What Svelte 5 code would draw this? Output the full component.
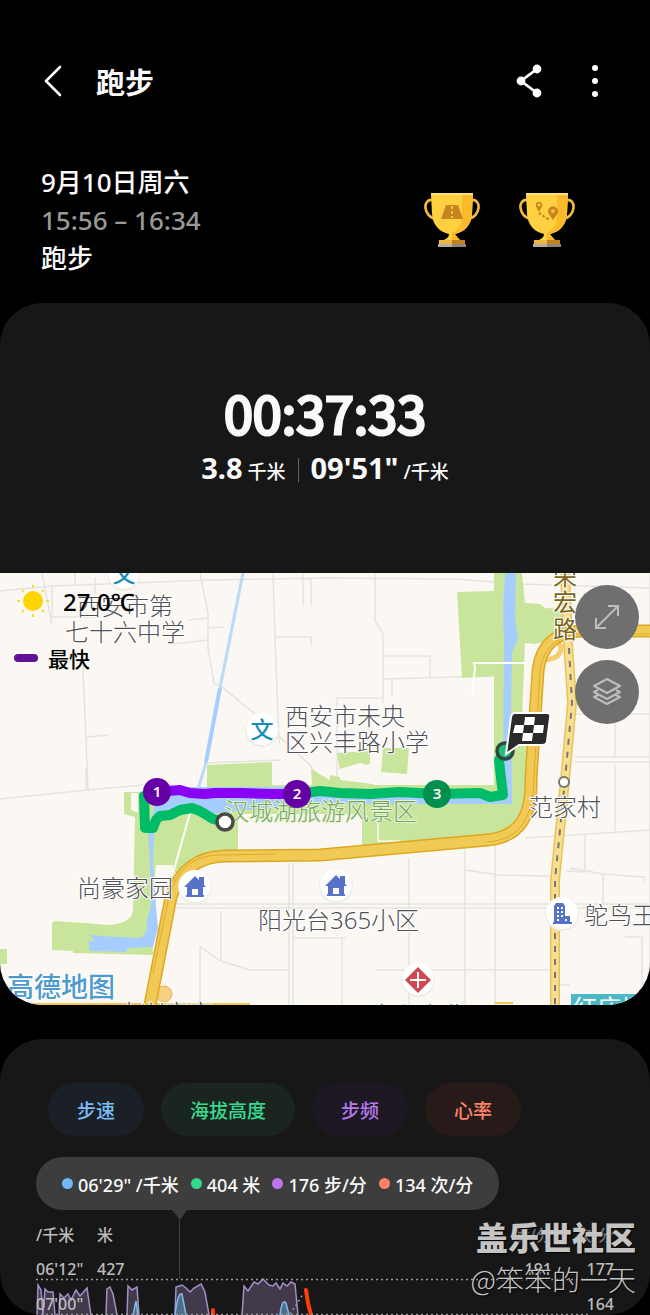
<script>
  const badges = ["road", "route"];

  const metrics = [
    { name: "步速", value: "06'29\" /千米", tone: "pace" },
    { name: "海拔高度", value: "404 米", tone: "altitude" },
    { name: "步频", value: "176 步/分", tone: "cadence" },
    { name: "心率", value: "134 次/分", tone: "heart" },
  ];

  const labels = [
    { x: 77, y: 42, text: "西安市第" },
    { x: 65, y: 68, text: "七十六中学" },
    { x: 285, y: 152, text: "西安市未央" },
    { x: 285, y: 178, text: "区兴丰路小学" },
    { x: 77, y: 324, text: "尚豪家园" },
    { x: 258, y: 356, text: "阳光台365小区" },
    { x: 529, y: 243, text: "范家村" },
    { x: 584, y: 351, text: "鸵鸟王" },
    { x: 117, y: 449, text: "大兴宫宅" },
    { x: 370, y: 451, text: "方兴嘉业" },
  ];

  const streets = [
    "M0 18L52 13L210 7L325 5L455 6L520 11L650 15",
    "M42 0L52 52M52 13V44H95M75 12V0M95 5V20",
    "M200 0L208 40V75L214 110L222 114L256 142L310 192L323 210",
    "M208 55L224 54M188 47L208 45M173 71L208 67",
    "M273 0L275 64L279 170M275 64H311V72M303 0V32",
    "M300 6H311V32M82 75L86 165L88 218M87 164L108 162",
    "M0 226L88 217L143 212M86 217V195",
    "M375 0V47L383 61V130M383 83H430V105M383 106L494 103",
    "M337 210V125H383M392 106V123M204 190L281 187",
    "M176 331H650M176 335H650",
    "M200 432V374L221 388L250 397H289M221 338V388",
    "M289 290V432M293 290V432M409 285V432M465 275V432M495 270V432M342 365V432",
    "M293 365H346M376 397H550M465 297L500 302L550 303",
    "M570 295L603 301L644 304V310M603 301V330",
    "M525 265L590 261L650 257M585 262V297M566 298L585 299",
    "M575 189H650M575 184H650M575 141H650M615 141V183M615 192V258",
    "M650 0V430M625 364H642V432M560 412H570",
  ];

  const laps = [
    { x: 157, y: 219, n: 1, color: "#6500a6" },
    { x: 297, y: 221, n: 2, color: "#6500a6" },
    { x: 437, y: 221, n: 3, color: "#008f4c" },
  ];

  const homes = [
    { x: 195, y: 314 },
    { x: 336, y: 313 },
  ];

  const schools = [
    { x: 124, y: 1 },
    { x: 262, y: 157 },
  ];
</script>

<div class="page">
  <header>
    <button class="icon" aria-label="返回">
      <svg width="20" height="34" viewBox="0 0 20 34">
        <path d="M17 3L3 17L17 31" fill="none" stroke="#fff" stroke-width="2.6" stroke-linecap="round" stroke-linejoin="round" />
      </svg>
    </button>
    <h1>跑步</h1>
    <button class="icon share" aria-label="分享">
      <svg width="28" height="34" viewBox="0 0 28 34">
        <path d="M21 5L5 17L21 29" fill="none" stroke="#fff" stroke-width="2.8" />
        <circle cx="21" cy="5" r="4.4" fill="#fff" />
        <circle cx="5" cy="17" r="4.4" fill="#fff" />
        <circle cx="21" cy="29" r="4.4" fill="#fff" />
      </svg>
    </button>
    <button class="icon" aria-label="更多选项">
      <svg width="10" height="34" viewBox="0 0 10 34" fill="#fff">
        <circle cx="5" cy="4" r="3" />
        <circle cx="5" cy="17" r="3" />
        <circle cx="5" cy="30" r="3" />
      </svg>
    </button>
  </header>

  <section class="summary">
    <div class="when">
      <p>9月10日周六</p>
      <p class="time">15:56 – 16:34</p>
      <p>跑步</p>
    </div>
    <div class="badges">
      {#each badges as badge}
        <svg width="56" height="56" viewBox="0 0 56 56">
          <path d="M9 8C-2 6 -1 25 12 27M47 8C58 6 57 25 44 27" fill="none" stroke="#f3b945" stroke-width="2.600" />
          <path d="M7 2H49L48 22C47 34 40 40 31 42C31 45 33 46 36 48H20C23 46 25 45 25 42C16 40 9 34 8 22Z" fill="#ffd140" />
          <path d="M38 2H49L48 22C47 34 40 40 31 42L36 48H28V41C36 38 38 30 38 20Z" fill="#fdb92c" />
          <path d="M7 1H49V3H7Z" fill="#ffe17a" />
          <path d="M15 48H28V52H15Z" fill="#eeb740" />
          <path d="M28 48H41V52H28Z" fill="#c4811c" />
          <path d="M14 52H28V55H14Z" fill="#b5ada0" />
          <path d="M28 52H42V55H28Z" fill="#8d877d" />
          {#if badge === "road"}
            <path d="M22 13H34L39 27H17Z" fill="#c88420" />
            <path d="M28 14V26" stroke="#ffd33f" stroke-width="1.600" stroke-dasharray="3 2" />
          {:else}
            <path d="M20 20L17 14.500A3.300 3.300 0 1 1 23 14.500ZM34 28L29.500 21.500A5 5 0 1 1 38.500 21.500Z" fill="#c88420" />
            <circle cx="20" cy="13" r="1.400" fill="#ffd33f" />
            <circle cx="34" cy="19" r="2" fill="#fdbd2d" />
            <path d="M20 21Q24 24 31 28" fill="none" stroke="#b87516" stroke-width="1.800" stroke-dasharray="2.500 2" />
          {/if}
        </svg>
      {/each}
    </div>
  </section>

  <section class="card">
    <div class="totals">
      <div class="duration">00:37:33</div>
      <div class="details">
        <span><b>3.8</b> 千米</span>
        <i></i>
        <span><b>09'51"</b> /千米</span>
      </div>
    </div>

    <div class="map">
      <svg class="tiles" viewBox="0 0 650 432">
        <rect width="650" height="432" fill="#fbf8f3" />

        <!-- streets -->
        {#each streets as d}
          <path {d} fill="none" stroke="#e5e3df" stroke-width="1.500" />
        {/each}

        <!-- parks -->
        <g fill="#c8e59b">
          <path d="M457 19L494 18V0H522L525 30L540 31L545 35L563 36L560 64L535 71L525 70L522 145L533 205L527 240Q518 258 487 264L362 273V241H238V277L208 284L173 301V292H156L152 334L153 382L73 380V378L52 377V350L55 348L110 352Q132 350 133 337L135 244L124 241V219H145L207 215V192L272 189V212H494V103L462 105Z" />
          <path d="M311 196L340 213H312ZM337 180L370 178V191L340 197ZM383 175H409L407 201L381 199ZM330 202L373 211V215H330ZM0 376H7V391H0Z" />
        </g>
        <path d="M340 196L360 190L373 194V211L340 207ZM362 249H238V277L362 273ZM131 220H138V240L131 237Z" fill="#fbf8f3" />
        <path d="M378 247V268H400" fill="none" stroke="#fbf8f3" stroke-width="1.500" />

        <!-- water -->
        <g fill="#a6cdff">
          <path d="M505 0H516L515 45L518 65L512 80L511 135L512 231H300L210 241L190 232L152 244L158 214H300L503 222L504 70L503 35Z" />
          <path d="M148 258H154L153 290L156 334L158 355L153 374L127 375V379L90 378L88 369L95 367L88 362L100 363L140 365Q148 362 147 347L151 334L150 292Z" />
        </g>
        <path d="M243 0L220 115L206 190L198 216" fill="none" stroke="#bad8f8" stroke-width="3" />
        <path d="M220 115L206 189" fill="none" stroke="#a6cdff" stroke-width="4" />
        <path d="M190 240L173 300M472 123L475 95L474 90H545" fill="none" stroke="#fffefa" stroke-width="2" />

        <!-- roads -->
        <path d="M565 0L568 70L572 130L565 207L560 257L555 307V432" fill="none" stroke="#e8c35b" stroke-width="10" />
        <path d="M565 0L568 70L572 130L565 207L560 257L555 307V432" fill="none" stroke="#f8df90" stroke-width="7" />
        <path d="M569 75L572 130L565 207L560 257L555 307V432" fill="none" stroke="#777" stroke-width="2" stroke-dasharray="6 7" />
        <path d="M538 86Q557 89 561 77Q561 65 548 72" fill="none" stroke="#f3ce6d" stroke-width="5" />
        <path d="M0 431H250M495 430H513" stroke="#ecc653" stroke-width="2" />
        <circle cx="164" cy="421" r="8" fill="#f8cf83" stroke="#e5b45e" />
        <path d="M650 58H585C557 57 541 72 538 98L531 205C532 240 522 264 487 267L320 282L225 283Q184 284 171 324L150 432" fill="none" stroke="#dca722" stroke-width="13" />
        <path d="M650 58H585C557 57 541 72 538 98L531 205C532 240 522 264 487 267L320 282L225 283Q184 284 171 324L150 432" fill="none" stroke="#f1ca55" stroke-width="10" />
        <path d="M650 61H585C560 60 543 74 540 98L534 205C533 242 522 267 487 269M275 281L220 282Q180 282 169 324L153 400" fill="none" stroke="#dfaa28" stroke-width="1" />
        <circle cx="564" cy="209" r="5" fill="#fff" stroke="#777" stroke-width="2" />

        <!-- place names -->
        <g class="place">
          {#each labels as label}
            <text x={label.x} y={label.y}>{label.text}</text>
          {/each}
          <text class="green" x="225" y="247">汉城湖旅游风景区</text>
          <text class="street" x="553" y="12">荣</text>
          <text class="street" x="553" y="38">宏</text>
          <text class="street" x="553" y="65">路</text>
          <text class="amap" x="7" y="424">高德地图</text>
        </g>
        <rect x="571" y="421" width="79" height="11" fill="#4bb8c6" />
        <text class="station" x="573" y="444">红庙坡</text>

        <!-- points of interest -->
        {#each schools as school}
          <circle cx={school.x} cy={school.y} r="17" fill="#eeece8" />
          <circle cx={school.x} cy={school.y - 1} r="16" fill="#fff" />
          <text class="school" x={school.x} y={school.y + 8}>文</text>
        {/each}
        {#each homes as home}
          <g transform="translate({home.x} {home.y})">
            <circle r="17" fill="#eeece8" />
            <circle cy="-1" r="16" fill="#fff" />
            <path d="M-11 0L0 -11L4 -7V-10H9V-2L11 0H8V8H9V10H-9V8H-8V0ZM-3 2V8H3V2Z" fill="#5773c7" fill-rule="evenodd" />
          </g>
        {/each}
        <circle cx="562" cy="341" r="17" fill="#eeece8" />
        <circle cx="562" cy="340" r="16" fill="#fff" />
        <path d="M554 333L556 330H563L565 333V343H570V349H572V351H553V349H554Z" fill="#5773c7" />
        <path d="M557 335H559M561 335H563M557 339H559M561 339H563M557 343H559M561 343H563M557 347H559M565 347H567" stroke="#fff" stroke-width="2" />
        <circle cx="418" cy="407" r="17" fill="#eeece8" />
        <circle cx="418" cy="406" r="16" fill="#fff" />
        <path d="M418 394L431 407L418 420L405 407Z" fill="#d14850" />
        <path d="M410 407H426M418 399V415" stroke="#fff" stroke-width="2" />

        <!-- track -->
        <g fill="none" stroke-width="10" stroke-linecap="round" stroke-linejoin="round">
          <path d="M225 249L213 246L200 238L192 235L180 237L170 242L160 243L156 247L153 255H145L144 223L157 219" stroke="#00bb67" />
          <path d="M297 221L320 218L340 220L370 221L400 219L437 221L480 220L490 224L503 222L501 205L499 187L505 179" stroke="#00bb67" />
          <path d="M157 219L168 218L180 217L190 220L205 221L215 220L240 220L270 221H297" stroke="#8a00f4" />
        </g>
        <circle cx="225" cy="249" r="8" fill="#fff" stroke="#484848" stroke-width="3.500" />
        <circle cx="505" cy="178" r="8" fill="#27be7b" stroke="#304840" stroke-width="3.500" />
        <path d="M515 140H547Q551 140 550 145L547 168Q547 172 542 172H519L506 181L511 144Q512 140 515 140Z" fill="#2a2a2a" stroke="#fff" stroke-width="2" />
        <path d="M525 144H535L534 152H524ZM515 152H524L523 160H513ZM534 152H544L543 160H533ZM523 160H533L532 168H522Z" fill="#fff" />
        {#each laps as lap}
          <circle cx={lap.x} cy={lap.y} r="14" fill={lap.color} />
          <text class="lap" x={lap.x} y={lap.y + 5}>{lap.n}</text>
        {/each}
      </svg>

      <div class="legend">
        <div class="legend-row">
          <svg width="32" height="32" viewBox="0 0 32 32">
            <circle cx="16" cy="16" r="10" fill="#fdd500" />
            <path d="M16 0V3M16 29V32M0 16H3M29 16H32M5 5L7 7M25 25L27 27M5 27L7 25M25 7L27 5" stroke="#f7d94c" stroke-width="2" />
          </svg>
          <span class="temperature">27.0℃</span>
        </div>
        <div class="legend-row">
          <i class="swatch"></i>
          <span>最快</span>
        </div>
      </div>

      <div class="map-buttons">
        <button aria-label="展开地图">
          <svg width="26" height="26" viewBox="0 0 26 26">
            <path d="M2 24L24 2M14 2H24V12M2 14V24H12" fill="none" stroke="#bdbdbd" stroke-width="2" />
          </svg>
        </button>
        <button aria-label="地图图层">
          <svg width="30" height="30" viewBox="0 0 30 30">
            <path d="M15 2L28 9L15 16L2 9ZM6 13L2 15L15 22L28 15L24 13M6 18L2 20L15 27L28 20L24 18" fill="none" stroke="#bdbdbd" stroke-width="2" stroke-linejoin="round" />
          </svg>
        </button>
      </div>
    </div>
  </section>

  <section class="card chart">
    <div class="tabs">
      {#each metrics as metric}
        <button class={metric.tone}>{metric.name}</button>
      {/each}
    </div>
    <div class="tooltip">
      {#each metrics as metric}
        <span class="reading"><i class={metric.tone}></i>{metric.value}</span>
      {/each}
    </div>
    <svg class="plot" viewBox="0 0 650 105">
      <path d="M172 0H187L180 10Z" fill="#3d3d3d" />
      <path d="M179.500 10V69" stroke="#3d3d3d" />
      <g fill="#42394b" stroke="#a48fc6" stroke-width="1.500">
        <path d="M37 105L38 75L41 80L43 105" />
        <path d="M43 105L45 79L48 82L53 82L55 105" />
        <path d="M59 105L60 84L64 88L68 84L71 90L76 80L80 86L87 78L89 92L91 105" />
        <path d="M106 105L107 79L110 77L113 84L117 105" />
        <path d="M127 105L128 76L132 80L137 77L139 105" />
        <path d="M175 105L176 77L182 75L186 78L190 82L194 78L201 74L205 82L209 105" />
        <path d="M242 105L244 76L248 81L254 72L258 74L263 69L269 75L273 76L276 73L280 79L283 73L287 76L291 72L295 74L298 105" />
      </g>
      <g fill="#4d6f8b" stroke="#82bbe8" stroke-width="1.500">
        <path d="M133 105L136 91L138 105" />
        <path d="M175 105Q178 81 182 84L186 105" />
        <path d="M280 105Q282 88 286 93L289 105" />
      </g>
      <path d="M213 100V105M306 80L308 93L311 105" fill="none" stroke="#ff3d08" stroke-width="4" stroke-linecap="round" />
      <path d="M36 69.500H590M36 104.500H590M290 104L304 83" fill="none" stroke="#999" stroke-width="1.500" stroke-dasharray="2 3" />
      <g class="axis">
        <text x="36" y="31">/千米</text>
        <text x="97" y="31">米</text>
        <text x="36" y="65">06'12"</text>
        <text x="97" y="65">427</text>
        <text x="36" y="100">07'00"</text>
        <g class="right">
          <text class="dim" x="552" y="31">步/分</text>
          <text class="dim" x="614" y="31">次/分</text>
          <text x="552" y="65">191</text>
          <text x="614" y="65">177</text>
          <text x="614" y="100">164</text>
        </g>
      </g>
    </svg>
    <div class="watermark">
      <strong>盖乐世社区</strong>
      <span>@笨笨的一天</span>
    </div>
  </section>
</div>

<style>
  :global(body) {
    background: #000;
  }
  .page {
    color: #fafafa;
    font-family: "Noto Sans", "Noto Sans CJK SC", sans-serif;
    font-weight: 500;
  }
  button {
    padding: 0;
    border: 0;
    color: inherit;
    font: inherit;
    background: none;
    cursor: pointer;
  }
  svg {
    display: block;
  }
  p,
  h1 {
    margin: 0;
  }
  header {
    display: flex;
    align-items: center;
    padding: 59px 50px 0 43px;
    height: 44px;
  }
  h1 {
    flex: 1;
    margin-left: 33px;
    font-size: 29px;
    font-weight: 700;
  }
  .share {
    margin-right: 46px;
  }
  .summary {
    display: flex;
    justify-content: space-between;
    align-items: center;
    padding: 60px 75px 26px 41px;
  }
  .when p {
    font-size: 26px;
    line-height: 38px;
  }
  .when .time {
    color: #999;
  }
  .badges {
    display: flex;
    gap: 39px;
  }
  .card {
    position: relative;
    overflow: hidden;
    border-radius: 42px;
    background: #171717;
  }
  .totals {
    box-sizing: border-box;
    height: 270px;
    padding-top: 73px;
    text-align: center;
  }
  .duration {
    font-family: "Noto Sans CJK SC", sans-serif;
    font-size: 52px;
    font-weight: 400;
    line-height: 72px;
    -webkit-text-stroke: 3px currentColor;
  }
  .details {
    display: flex;
    justify-content: center;
    align-items: center;
    gap: 12px;
    font-size: 19px;
    line-height: 40px;
  }
  .details b {
    font-size: 29px;
    font-weight: 700;
  }
  .details i {
    width: 1px;
    height: 24px;
    background: #666;
  }
  .tiles,
  .plot {
    width: 100%;
    height: auto;
  }
  .map {
    position: relative;
  }
  .place text {
    fill: #505055;
    font-size: 24px;
    font-weight: 300;
    paint-order: stroke;
    stroke: #fff;
    stroke-width: 2px;
  }
  .place .green {
    fill: #74a568;
    stroke: #e4f2ce;
  }
  .place .street {
    fill: #7b6518;
    font-weight: 400;
  }
  .place .amap {
    fill: #4c9ace;
    font-size: 27px;
    font-weight: 500;
  }
  .station {
    fill: #fff;
    font-size: 24px;
    font-weight: 400;
  }
  .school {
    fill: #168eb2;
    font-size: 23px;
    font-weight: 500;
    text-anchor: middle;
  }
  .lap {
    fill: #fff;
    font-size: 15px;
    font-weight: 600;
    text-anchor: middle;
  }
  .legend {
    position: absolute;
    top: 12px;
    left: 14px;
    color: #000;
    font-size: 21px;
  }
  .legend-row {
    display: flex;
    align-items: center;
    height: 32px;
    padding-left: 3px;
    gap: 14px;
  }
  .legend-row + .legend-row {
    height: 30px;
    margin-top: 26px;
    padding-left: 0;
    gap: 10px;
  }
  .temperature {
    font-size: 24px;
  }
  .swatch {
    width: 24px;
    height: 8px;
    border-radius: 4px;
    background: #63109d;
  }
  .map-buttons {
    position: absolute;
    top: 12px;
    right: 11px;
    display: grid;
    gap: 11px;
  }
  .map-buttons button {
    display: grid;
    place-items: center;
    width: 64px;
    height: 64px;
    border-radius: 50%;
    background: #6f6f6f;
  }
  .chart {
    margin-top: 34px;
    padding-top: 44px;
  }
  .tabs {
    display: flex;
    gap: 17px;
    padding-left: 48px;
  }
  .tabs button {
    height: 53px;
    padding: 0 29px;
    border-radius: 27px;
    font-size: 19px;
  }
  .tabs .pace {
    color: #7dbdf9;
    background: #1a2026;
  }
  .tabs .altitude {
    color: #39d98f;
    background: #1a2520;
  }
  .tabs .cadence {
    color: #b878ee;
    background: #1e1825;
  }
  .tabs .heart {
    color: #ff826c;
    background: #261b19;
  }
  .tooltip {
    display: flex;
    align-items: center;
    gap: 12px;
    width: fit-content;
    height: 53px;
    margin: 21px 0 0 36px;
    padding: 0 26px;
    border-radius: 27px;
    font-size: 18px;
    background: #3d3d3d;
  }
  .reading {
    display: flex;
    align-items: center;
    gap: 5px;
    white-space: nowrap;
  }
  .reading i {
    width: 11px;
    height: 11px;
    border-radius: 50%;
  }
  .reading .pace {
    background: #72b8f8;
  }
  .reading .altitude {
    background: #31d98f;
  }
  .reading .cadence {
    background: #bd75ee;
  }
  .reading .heart {
    background: #ff7f68;
  }
  .axis text {
    fill: #bdbdbd;
    font-size: 16px;
  }
  .axis .right text {
    text-anchor: end;
  }
  .axis .dim {
    fill: #777;
  }
  .watermark {
    position: absolute;
    right: 14px;
    bottom: 14px;
    display: grid;
    justify-items: end;
    color: #c4c4c4;
    font-family: "Noto Sans CJK SC", sans-serif;
    line-height: 43px;
    text-shadow: 1px 1px 1px #000;
  }
  .watermark strong {
    font-size: 32px;
    font-weight: 900;
  }
  .watermark span {
    font-size: 28px;
    font-weight: 300;
  }
</style>
